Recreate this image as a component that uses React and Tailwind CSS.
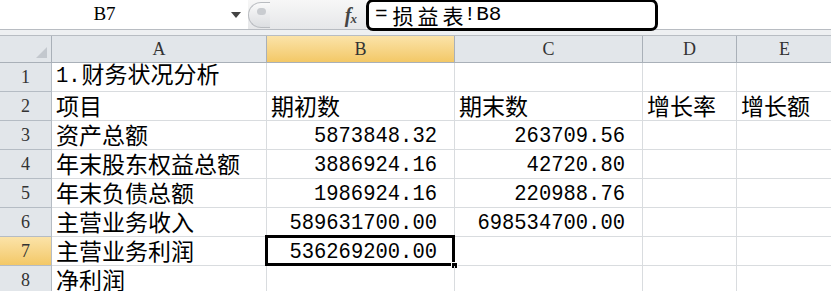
import React from 'react';

const rows = [
  { n: 1, a: [['m', '1.'], ['c', '财务状况分析']] },
  { n: 2, a: '项目', b: '期初数', c: '期末数', d: '增长率', e: '增长额' },
  { n: 3, a: '资产总额', b: 5873848.32, c: 263709.56 },
  { n: 4, a: '年末股东权益总额', b: 3886924.16, c: 42720.8 },
  { n: 5, a: '年末负债总额', b: 1986924.16, c: 220988.76 },
  { n: 6, a: '主营业务收入', b: 589631700, c: 698534700 },
  { n: 7, a: '主营业务利润', b: 536269200 },
  { n: 8, a: '净利润' },
];

const cell = 'h-[29px] border-r border-b border-[#d9dcdf] overflow-visible whitespace-nowrap';

const Text = ({ v }) => {
  if (v === undefined) return null;
  if (typeof v === 'number') {
    return (
      <div className="flex h-full items-end justify-end pr-[17px] pb-[1px]">
        <span className="inline-block font-['Liberation_Mono',monospace] text-[20.5px] leading-none text-black scale-y-[1.12] origin-bottom">
          {v.toFixed(2)}
        </span>
      </div>
    );
  }
  const parts = Array.isArray(v) ? v : [['c', v]];
  return (
    <div className="flex h-full items-end pl-[4px] pb-[3px]">
      <span className="inline-block font-['Noto_Sans_CJK_SC',sans-serif] text-[23px] leading-none text-black">
        {parts.map(([k, t], i) =>
          k === 'm' ? (
            <span key={i} className="inline-block font-['Liberation_Mono',monospace] text-[20.5px] scale-y-[1.12] origin-bottom mr-[1px]">
              {t}
            </span>
          ) : (
            <React.Fragment key={i}>{t}</React.Fragment>
          )
        )}
      </span>
    </div>
  );
};

const ColHead = ({ label, active }) => (
  <div
    className={`h-[27px] flex items-center justify-center border-r border-b border-[#a9b0b8] font-['Liberation_Serif',serif] text-[18px] text-[#333] ${
      active ? 'bg-gradient-to-b from-[#fbe3a8] to-[#f3c866]' : 'bg-[#e2e6ea]'
    }`}
  >
    {label}
  </div>
);

export default function App() {
  return (
    <div className="w-[831px] h-[291px] overflow-hidden bg-white select-none">
      {/* formula bar */}
      <div className="flex h-[30px] border-b border-[#b8bcc2] bg-white">
        <div className="w-[248px] flex items-center">
          <div className="flex-1 text-center pr-[22px] font-['Liberation_Serif',serif] text-[19px] text-black">B7</div>
          <svg width="10" height="6" viewBox="0 0 10 6" className="mr-[7px]">
            <path d="M0 0 L10 0 L5 6 Z" fill="#444" />
          </svg>
        </div>
        <div className="w-[118px] flex items-center bg-gradient-to-b from-[#f7f7f7] to-[#e6e7e9]">
          <div className="h-[26px] w-[22px] rounded-l-full border border-r-0 border-[#b9bcc0] bg-gradient-to-b from-[#fafafa] to-[#dcdee1] flex items-center justify-center">
            <div className="w-[9px] h-[7px] rounded-full bg-[#c9ccd0] ml-[4px] -mt-[6px]" />
          </div>
          <div className="flex-1" />
          <div className="mr-[9px] font-['Liberation_Serif',serif] italic font-bold text-[#444] leading-none flex items-end">
            <span className="text-[20px]">f</span>
            <span className="text-[13px] -ml-[1px]">x</span>
          </div>
        </div>
        <div className="flex-1 bg-white relative z-10">
          <div className="w-[292px] h-[32px] -mt-[1px] border-[3px] border-black rounded-[7px] bg-white flex items-center pl-[6px]">
            <span className="font-['Liberation_Mono',monospace] text-[21px] text-black mr-[5px]">=</span>
            <span className="font-['Noto_Sans_CJK_SC',sans-serif] text-[21px] tracking-[4px] text-black leading-none">损益表</span>
            <span className="font-['Liberation_Mono',monospace] text-[21px] text-black -ml-[4px]">!B8</span>
          </div>
        </div>
      </div>
      <div className="h-[6px] bg-[#eef0f2] border-b border-[#b8bdc3]" />

      {/* grid */}
      <div className="grid grid-cols-[52px_215px_188px_188px_94px_96px]">
        <div className="h-[27px] border-r border-b border-[#a9b0b8] bg-[#e2e6ea] flex items-end justify-end pr-[4px] pb-[4px]">
          <svg width="11" height="11" viewBox="0 0 11 11">
            <path d="M11 0 L11 11 L0 11 Z" fill="#c3c8ce" />
          </svg>
        </div>
        <ColHead label="A" />
        <ColHead label="B" active />
        <ColHead label="C" />
        <ColHead label="D" />
        <ColHead label="E" />

        {rows.map((r) => (
          <React.Fragment key={r.n}>
            <div
              className={`h-[29px] border-r border-b border-[#b5bcc4] flex items-center justify-center font-['Liberation_Serif',serif] text-[18px] text-[#333] ${
                r.n === 7 ? 'bg-gradient-to-b from-[#fbe3a8] to-[#f3c866]' : 'bg-[#e2e6ea]'
              }`}
            >
              {r.n}
            </div>
            <div className={cell}><Text v={r.a} /></div>
            <div className={`${cell} relative`}>
              <Text v={r.b} />
              {r.n === 7 && (
                <>
                  <div className="absolute -left-[2px] -top-[2px] -right-[1px] -bottom-[1px] border-[3px] border-black pointer-events-none" />
                  <div className="absolute -right-[4px] -bottom-[4px] w-[7px] h-[7px] bg-black border border-white" />
                </>
              )}
            </div>
            <div className={cell}><Text v={r.c} /></div>
            <div className={cell}><Text v={r.d} /></div>
            <div className={cell}><Text v={r.e} /></div>
          </React.Fragment>
        ))}
      </div>
    </div>
  );
}
